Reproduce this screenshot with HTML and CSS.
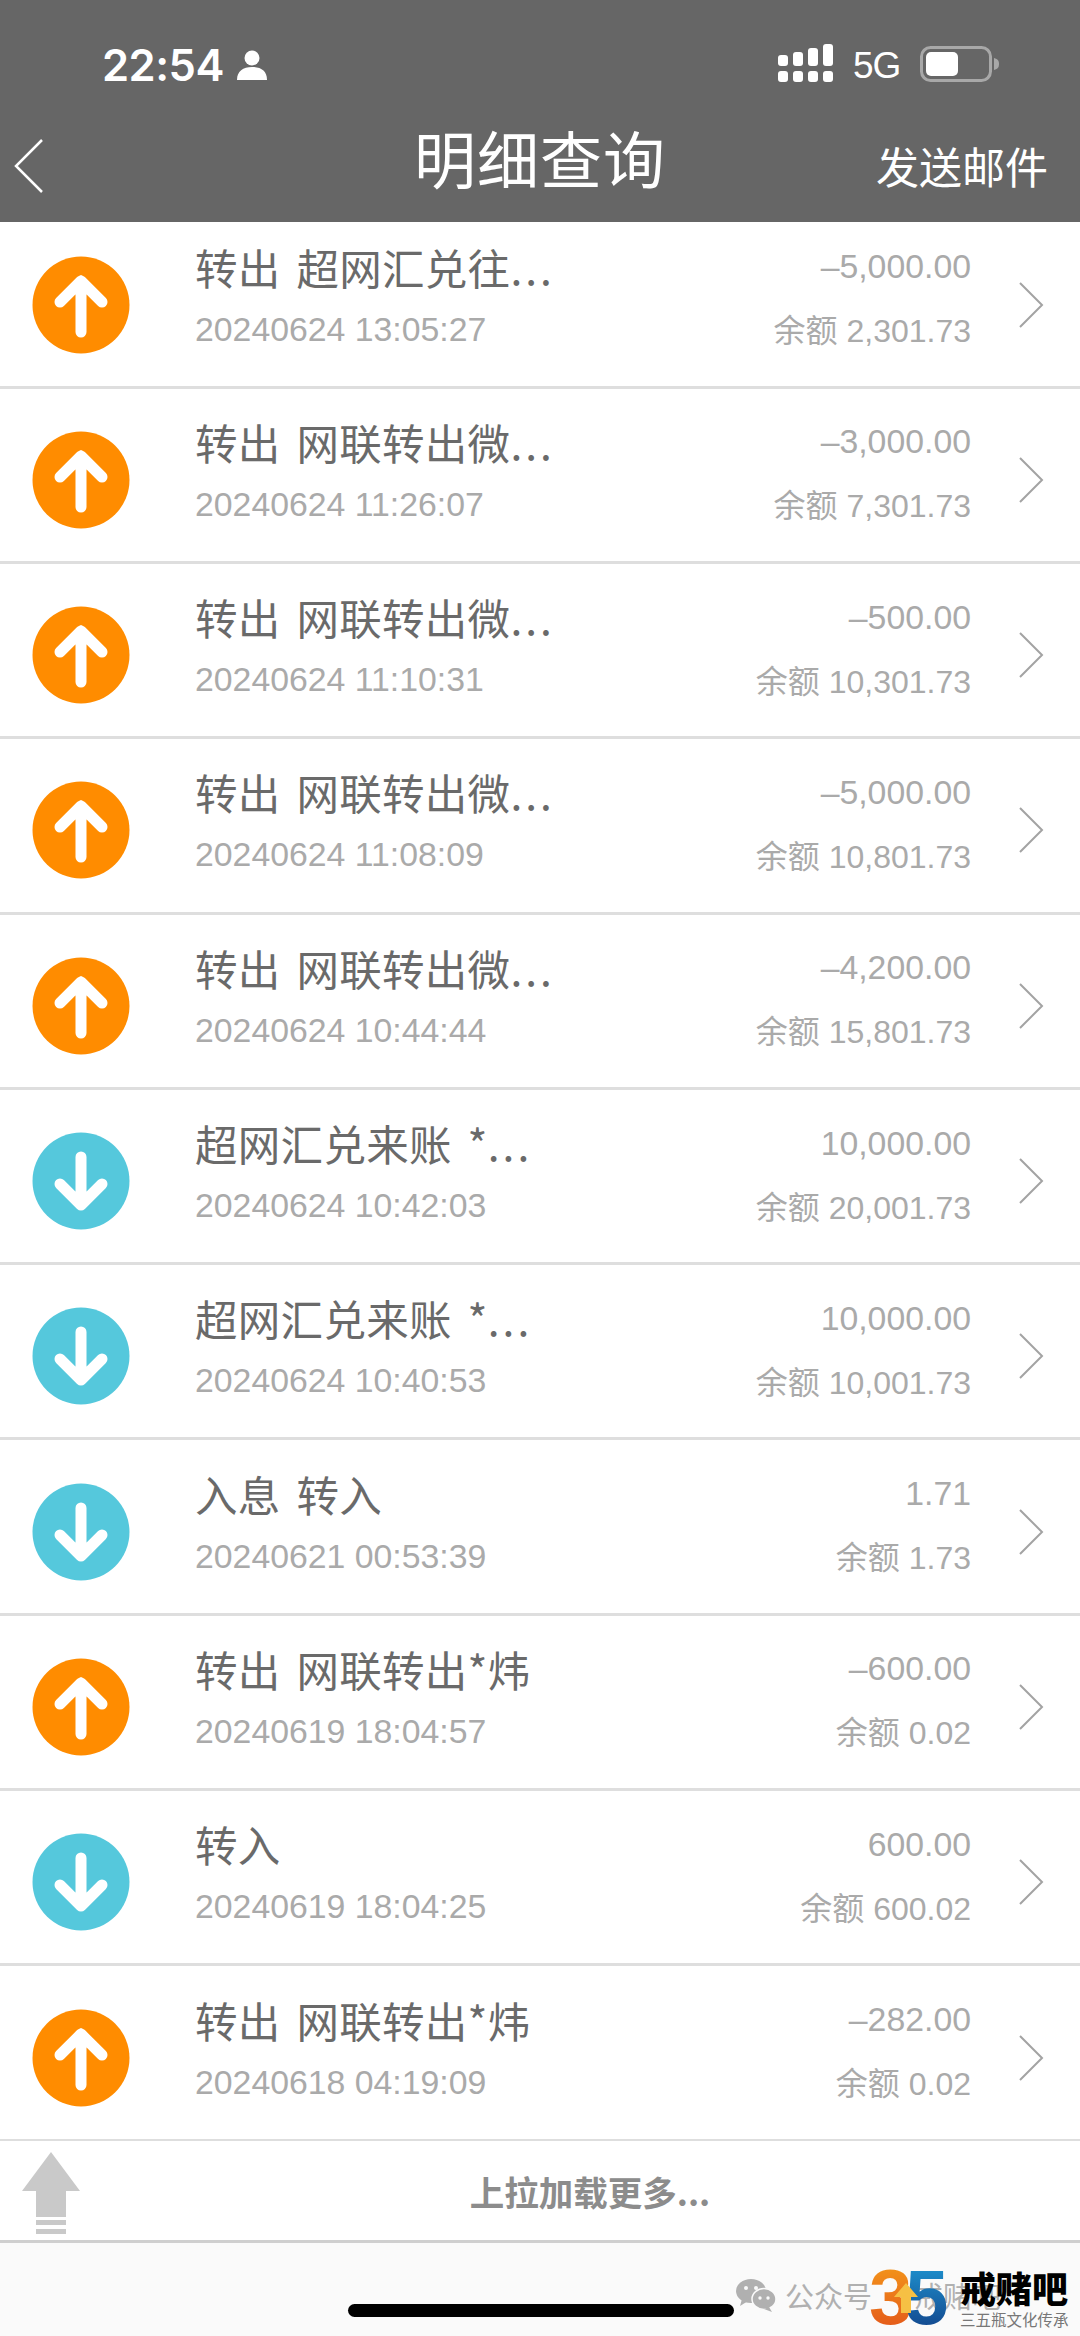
FILE: index.html
```html
<!DOCTYPE html>
<html lang="zh-CN">
<head>
<meta charset="utf-8">
<title>明细查询</title>
<link rel="stylesheet" href="styles.css">
</head>
<body>
<svg class="defs" width="0" height="0" aria-hidden="true">
  <symbol id="up" viewBox="0 0 98 98"><circle cx="49" cy="49" r="48.5" fill="#ff8c00"/><path d="M49 76V25M28 46 49 25 70 46" fill="none" stroke="#fff" stroke-width="11" stroke-linecap="round" stroke-linejoin="round"/></symbol>
  <symbol id="down" viewBox="0 0 98 98"><circle cx="49" cy="49" r="48.5" fill="#55c8dc"/><path d="M49 25V73M28 52 49 73 70 52" fill="none" stroke="#fff" stroke-width="11" stroke-linecap="round" stroke-linejoin="round"/></symbol>
  <symbol id="chev" viewBox="0 0 26 48"><path d="M2 2 24 24 2 46" fill="none" stroke="#a3a3a3" stroke-width="2"/></symbol>
</svg>
<div class="page">
  <header class="head">
    <div class="status">
      <div class="status-left">
        <span class="clock">22:54</span>
        <svg class="person" viewBox="0 0 30 30"><circle cx="15" cy="8" r="7.5" fill="#fff"/><path d="M0 30c0-9 6-13 15-13s15 4 15 13z" fill="#fff"/></svg>
      </div>
      <div class="status-right">
        <svg class="signal" viewBox="0 0 55 38" fill="#fff">
          <rect x="0" y="11" width="10" height="11" rx="3"/><rect x="0" y="27" width="10" height="11" rx="3"/>
          <rect x="15" y="8" width="10" height="14" rx="3"/><rect x="15" y="27" width="10" height="11" rx="3"/>
          <rect x="30" y="4" width="10" height="18" rx="3"/><rect x="30" y="27" width="10" height="11" rx="3"/>
          <rect x="45" y="0" width="10" height="22" rx="3"/><rect x="45" y="27" width="10" height="11" rx="3"/>
        </svg>
        <span class="net">5G</span>
        <svg class="battery" viewBox="0 0 80 36"><rect x="1.5" y="1.5" width="69" height="33" rx="9" fill="none" stroke="#a8a8a8" stroke-width="3"/><rect x="6" y="6" width="32" height="24" rx="5" fill="#fff"/><path d="M74 12c4 1 5 3 5 6s-1 5-5 6z" fill="#a8a8a8"/></svg>
      </div>
    </div>
    <div class="nav">
      <svg class="back" viewBox="0 0 30 54"><path d="M28 1 2 27 28 53" fill="none" stroke="#fff" stroke-width="2.5"/></svg>
      <h1 class="title">明细查询</h1>
      <span class="mail">发送邮件</span>
    </div>
  </header>

  <main class="list">
    <div class="list-inner">
      <div class="row"><svg class="ic"><use href="#up"/></svg><div class="info"><div class="name">转出 超网汇兑往<span class="dots">...</span></div><div class="sub">20240624 13:05:27</div></div><div class="money"><div class="amt">–5,000.00</div><div class="bal"><span class="cjk">余额</span> 2,301.73</div></div><svg class="chev"><use href="#chev"/></svg></div>
      <div class="row"><svg class="ic"><use href="#up"/></svg><div class="info"><div class="name">转出 网联转出微<span class="dots">...</span></div><div class="sub">20240624 11:26:07</div></div><div class="money"><div class="amt">–3,000.00</div><div class="bal"><span class="cjk">余额</span> 7,301.73</div></div><svg class="chev"><use href="#chev"/></svg></div>
      <div class="row"><svg class="ic"><use href="#up"/></svg><div class="info"><div class="name">转出 网联转出微<span class="dots">...</span></div><div class="sub">20240624 11:10:31</div></div><div class="money"><div class="amt">–500.00</div><div class="bal"><span class="cjk">余额</span> 10,301.73</div></div><svg class="chev"><use href="#chev"/></svg></div>
      <div class="row"><svg class="ic"><use href="#up"/></svg><div class="info"><div class="name">转出 网联转出微<span class="dots">...</span></div><div class="sub">20240624 11:08:09</div></div><div class="money"><div class="amt">–5,000.00</div><div class="bal"><span class="cjk">余额</span> 10,801.73</div></div><svg class="chev"><use href="#chev"/></svg></div>
      <div class="row"><svg class="ic"><use href="#up"/></svg><div class="info"><div class="name">转出 网联转出微<span class="dots">...</span></div><div class="sub">20240624 10:44:44</div></div><div class="money"><div class="amt">–4,200.00</div><div class="bal"><span class="cjk">余额</span> 15,801.73</div></div><svg class="chev"><use href="#chev"/></svg></div>
      <div class="row"><svg class="ic"><use href="#down"/></svg><div class="info"><div class="name">超网汇兑来账 *<span class="dots">...</span></div><div class="sub">20240624 10:42:03</div></div><div class="money"><div class="amt">10,000.00</div><div class="bal"><span class="cjk">余额</span> 20,001.73</div></div><svg class="chev"><use href="#chev"/></svg></div>
      <div class="row"><svg class="ic"><use href="#down"/></svg><div class="info"><div class="name">超网汇兑来账 *<span class="dots">...</span></div><div class="sub">20240624 10:40:53</div></div><div class="money"><div class="amt">10,000.00</div><div class="bal"><span class="cjk">余额</span> 10,001.73</div></div><svg class="chev"><use href="#chev"/></svg></div>
      <div class="row"><svg class="ic"><use href="#down"/></svg><div class="info"><div class="name">入息 转入</div><div class="sub">20240621 00:53:39</div></div><div class="money"><div class="amt">1.71</div><div class="bal"><span class="cjk">余额</span> 1.73</div></div><svg class="chev"><use href="#chev"/></svg></div>
      <div class="row"><svg class="ic"><use href="#up"/></svg><div class="info"><div class="name">转出 网联转出*炜</div><div class="sub">20240619 18:04:57</div></div><div class="money"><div class="amt">–600.00</div><div class="bal"><span class="cjk">余额</span> 0.02</div></div><svg class="chev"><use href="#chev"/></svg></div>
      <div class="row"><svg class="ic"><use href="#down"/></svg><div class="info"><div class="name">转入</div><div class="sub">20240619 18:04:25</div></div><div class="money"><div class="amt">600.00</div><div class="bal"><span class="cjk">余额</span> 600.02</div></div><svg class="chev"><use href="#chev"/></svg></div>
      <div class="row"><svg class="ic"><use href="#up"/></svg><div class="info"><div class="name">转出 网联转出*炜</div><div class="sub">20240618 04:19:09</div></div><div class="money"><div class="amt">–282.00</div><div class="bal"><span class="cjk">余额</span> 0.02</div></div><svg class="chev"><use href="#chev"/></svg></div>
    </div>
  </main>

  <div class="more">
    <svg class="pull" viewBox="0 0 58 82" fill="#c9c9c9"><path d="M29 0 58 39H44V65H14V39H0z"/><rect x="14" y="68" width="30" height="5"/><rect x="14" y="77" width="30" height="5"/></svg>
    <span class="more-text">上拉加载更多...</span>
  </div>

  <footer class="foot">
    <div class="home"></div>
    <div class="mark">
      <svg class="wechat" viewBox="0 0 40 33" fill="#b0b0b0"><ellipse cx="15" cy="12" rx="15" ry="12"/><path d="M6 20 4 27 12 22z"/><ellipse cx="28" cy="20" rx="12" ry="10.5" stroke="#fafafa" stroke-width="1.5"/><path d="M33 28 36 33 28 30z"/><circle cx="10" cy="9" r="2" fill="#fafafa"/><circle cx="20" cy="9" r="2" fill="#fafafa"/><circle cx="24" cy="19" r="1.7" fill="#fafafa"/><circle cx="32" cy="19" r="1.7" fill="#fafafa"/></svg>
      <span class="mark-text">公众号 · 戒赌吧</span>
    </div>
    <div class="logo">
      <span class="three">3</span><span class="five">5</span>
      <svg class="logo-arrow" viewBox="0 0 24 30"><path d="M12 0 24 14H17V30H7V14H0z" fill="#f6c044"/></svg>
    </div>
    <div class="brand">
      <span class="brand-name">戒赌吧</span>
      <span class="brand-sub">三五瓶文化传承</span>
    </div>
  </footer>
</div>
</body>
</html>
```
FILE: styles.css
```css
* { box-sizing: border-box; }
html, body { margin: 0; padding: 0; }
body { background: #fafafa; font-family: "Liberation Sans", "Noto Sans CJK SC", sans-serif; }
.defs { position: absolute; }
.page { width: 1080px; height: 2336px; display: flex; flex-direction: column; overflow: hidden; }

.head { height: 222px; background: #666; color: #fff; display: flex; flex-direction: column; flex: none; }
.status { height: 120px; padding: 40px 82px 0 102px; display: flex; justify-content: space-between; align-items: flex-start; }
.status-left { display: flex; align-items: center; gap: 13px; height: 44px; margin-top: 3px; }
.clock { font-family: "Inter", "Liberation Sans", sans-serif; font-size: 43.5px; font-weight: 600; letter-spacing: -0.5px; line-height: 44px; }
.person { width: 30px; height: 30px; }
.status-right { display: flex; align-items: center; height: 44px; padding-top: 2px; }
.signal { width: 55px; height: 38px; margin-right: 20px; }
.net { font-family: "Liberation Sans", sans-serif; font-size: 37px; line-height: 44px; width: 47px; margin-right: 20px; margin-top: 5px; letter-spacing: -1px; }
.battery { width: 80px; height: 36px; margin-right: -2px; margin-top: 2px; }

.nav { position: relative; flex: 1; display: flex; align-items: center; justify-content: center; padding-bottom: 28px; }
.back { position: absolute; left: 14px; top: 19px; width: 30px; height: 54px; }
.title { margin: 0; font-family: "Noto Sans CJK SC", sans-serif; font-size: 62px; font-weight: 400; line-height: 70px; letter-spacing: 1px; }
.mail { position: absolute; right: 32px; top: 15px; font-family: "Noto Sans CJK SC", sans-serif; font-size: 43px; line-height: 60px; }

.list { height: 1919px; flex: none; overflow: hidden; background: #fff; }
.list-inner { margin-top: -8.6px; }
.row { height: 175.3px; display: flex; align-items: center; padding-left: 32px; border-bottom: 3px solid #dedede; }
.ic { width: 98px; height: 98px; margin-top: 10px; flex: none; }
.info { margin-left: 65px; flex: 1; margin-bottom: 4px; }
.money { text-align: right; margin-bottom: 4px; }
.name { font-family: "Noto Sans CJK SC", sans-serif; font-size: 42.5px; line-height: 63px; color: #6a6a6a; white-space: nowrap; word-spacing: 6px; letter-spacing: 0.3px; }
.dots { letter-spacing: 3px; }
.sub, .amt, .bal { color: #aaa; white-space: nowrap; }
.sub { font-size: 33.8px; line-height: 63px; }
.amt { font-size: 33.8px; line-height: 63px; margin-top: 2px; }
.bal { font-size: 32px; line-height: 61px; }
.cjk { font-family: "Noto Sans CJK SC", sans-serif; font-size: 32px; }
.chev { width: 26px; height: 48px; margin: 10px 36px 0 47px; flex: none; }

.more { position: relative; height: 102px; flex: none; background: #fff; border-bottom: 3px solid #cfcfcf; display: flex; align-items: center; justify-content: center; padding-left: 100px; }
.pull { position: absolute; left: 22px; top: 11px; width: 58px; height: 82px; }
.more-text { font-family: "Noto Sans CJK SC", sans-serif; font-size: 34.5px; font-weight: 700; color: #8c8c8c; line-height: 50px; }

.foot { position: relative; flex: 1; background: #fafafa; }
.home { position: absolute; left: 348px; top: 61px; width: 386px; height: 13px; border-radius: 7px; background: #000; }
.mark { position: absolute; left: 736px; top: 34px; display: flex; align-items: center; gap: 9px; }
.wechat { width: 40px; height: 33px; }
.mark-text { font-family: "Noto Sans CJK SC", sans-serif; font-size: 29px; color: #b0b0b0; white-space: nowrap; line-height: 36px; }
.logo { position: absolute; left: 869px; top: 14px; width: 84px; height: 80px; }
.three, .five { position: absolute; top: 0; font-family: "Liberation Sans", sans-serif; font-weight: 700; font-size: 78px; line-height: 80px; -webkit-background-clip: text; background-clip: text; color: transparent; }
.three { left: 0; background-image: linear-gradient(#f59c1a, #e2521a); }
.five { left: 36px; background-image: linear-gradient(#1f9ad6, #123f86); }
.logo-arrow { position: absolute; left: 25px; top: 26px; width: 24px; height: 30px; }
.brand { position: absolute; left: 960px; top: 24px; width: 112px; display: flex; flex-direction: column; align-items: flex-start; }
.brand-name { font-family: "Noto Sans CJK SC", sans-serif; font-size: 36px; font-weight: 900; color: #000; line-height: 40px; white-space: nowrap; }
.brand-sub { font-family: "Noto Sans CJK SC", sans-serif; font-size: 15.5px; color: #777; line-height: 20px; margin-top: 2px; white-space: nowrap; }
```
